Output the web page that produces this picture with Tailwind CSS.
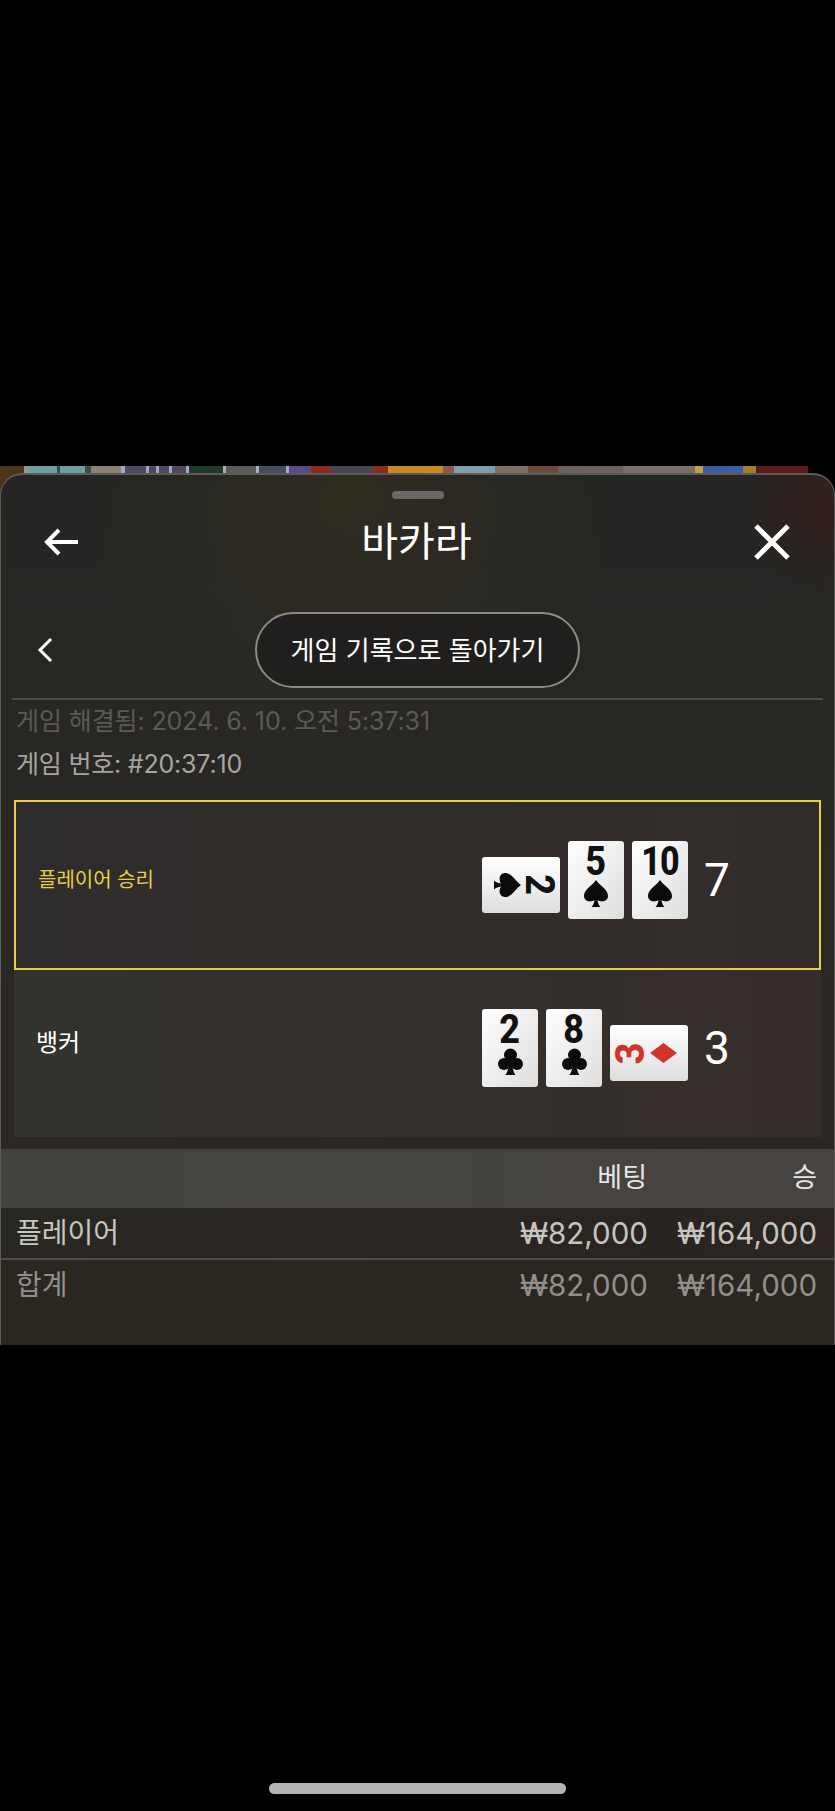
<!doctype html>
<html lang="ko">
<head>
<meta charset="utf-8">
<title>바카라</title>
<script src="https://cdn.jsdelivr.net/npm/@tailwindcss/browser@4"></script>
</head>
<body class="bg-black">
<div class="relative w-[835px] h-[1811px] overflow-hidden bg-black pt-[466px] font-['Inter','Noto_Sans_CJK_KR',sans-serif]">
  <!-- game scene peeking above the sheet -->
  <div class="flex h-[26px]">
    <div class="w-[24px] bg-[#4a3518]"></div><div class="w-[4px] bg-[#8f9a90]"></div><div class="w-[29px] bg-[#6d9ea0]"></div><div class="w-[3px] bg-[#3a4a50]"></div><div class="w-[25px] bg-[#6d9ea0]"></div><div class="w-[6px] bg-[#3a4a50]"></div><div class="w-[30px] bg-[#8c8172]"></div><div class="w-[4px] bg-[#a9a6c4]"></div><div class="w-[21px] bg-[#4c4860]"></div><div class="w-[3px] bg-[#a9a6c4]"></div><div class="w-[7px] bg-[#4c4860]"></div><div class="w-[3px] bg-[#a9a6c4]"></div><div class="w-[10px] bg-[#4c4860]"></div><div class="w-[3px] bg-[#a9a6c4]"></div><div class="w-[14px] bg-[#4c4860]"></div><div class="w-[3px] bg-[#a9a6c4]"></div><div class="w-[34px] bg-[#1f3a2c]"></div><div class="w-[3px] bg-[#a9b0b0]"></div><div class="w-[30px] bg-[#5a5a58]"></div><div class="w-[3px] bg-[#a9b0b0]"></div><div class="w-[27px] bg-[#454c60]"></div><div class="w-[3px] bg-[#a9a6c4]"></div><div class="w-[22px] bg-[#5b4a8a]"></div><div class="w-[20px] bg-[#8a2a20]"></div><div class="w-[42px] bg-[#474650]"></div><div class="w-[15px] bg-[#8a2a20]"></div><div class="w-[55px] bg-[#c88a20]"></div><div class="w-[11px] bg-[#8a5a50]"></div><div class="w-[41px] bg-[#7f9fb0]"></div><div class="w-[33px] bg-[#7b6f60]"></div><div class="w-[30px] bg-[#6a4a3a]"></div><div class="w-[65px] bg-[#6b5f5f]"></div><div class="w-[72px] bg-[#7a6e68]"></div><div class="w-[8px] bg-[#c0a040]"></div><div class="w-[40px] bg-[#3a5ea0]"></div><div class="w-[13px] bg-[#a08030]"></div><div class="w-[52px] bg-[#5a1a18]"></div>
  </div>

  <!-- sheet -->
  <div class="relative -mt-[19px] h-[872px] rounded-t-[22px] border-x border-t-2 border-[#5c5b58] bg-[radial-gradient(circle_at_100%_3%,#341f1c,transparent_90px),radial-gradient(circle_at_42%_3%,#2e2b20,transparent_260px),linear-gradient(180deg,#252523_0%,#2a2825_45%,#2b2620_100%)]">
    <div class="mx-auto mt-[16px] h-[8px] w-[52px] rounded-full bg-[#6a6967]"></div>

    <div class="flex h-[86px] items-center justify-between pl-[42px] pr-[44px]">
      <svg class="h-[28px] w-[36px]" viewBox="0 0 36 28" fill="none" stroke="#fff" stroke-width="4"><path d="M35 14H4M16 2 4 14l12 12"/></svg>
      <h1 class="text-[40px] leading-none font-normal text-white">바카라</h1>
      <svg class="h-[36px] w-[36px]" viewBox="0 0 36 36" fill="none" stroke="#fff" stroke-width="5"><path d="M2 2 34 34M34 2 2 34"/></svg>
    </div>

    <div class="relative mt-[27px] flex h-[76px] justify-center">
      <svg class="absolute left-[35px] top-[25px] h-[26px] w-[18px]" viewBox="0 0 18 26" fill="none" stroke="#fff" stroke-width="3"><path d="M15 2 4 13l11 11"/></svg>
      <button class="h-[76px] w-[325px] rounded-full border-2 border-[#8b8a85] bg-[#201f1d] text-[26px] text-white">게임 기록으로 돌아가기</button>
    </div>

    <div class="mx-[11px] mt-[10px] h-[2px] bg-[#4b4a44]"></div>

    <p class="mt-[2px] flex h-[40px] items-center px-[15px] text-[25px] tracking-[-0.1px] text-[#5b5a55]">게임 해결됨: 2024. 6. 10. 오전 5:37:31</p>
    <p class="mt-[3px] flex h-[40px] items-center px-[15px] text-[25px] tracking-[-0.2px] text-[#a6a5a0]">게임 번호: #20:37:10</p>

    <div class="mx-[13px] mt-[15px]">
      <div class="flex h-[170px] items-center justify-between border-2 border-[#e6cf45] bg-linear-to-r from-[#2f2d2c] to-[#332d2a] pl-[22px] pb-[10px]">
        <span class="text-[20px] text-[#e8cf45]">플레이어 승리</span>
        <div class="flex items-center gap-[8px] pr-[75px]">
          <div class="mt-[10px] flex h-[56px] w-[78px] items-center justify-center">
            <div class="flex h-[78px] w-[56px] shrink-0 rotate-90 flex-col items-center rounded-[3px] bg-linear-to-r from-white to-[#dedede] pt-[3px]">
              <span class="h-[36px] scale-x-[.9] font-['Roboto'] text-[40px] leading-[36px] font-extrabold text-[#111]">2</span>
              <svg class="h-[27px] w-[24px]" viewBox="0 0 24 27" fill="#0b0b0b"><path d="M12 0C9 5 0 9 0 16c0 5 6 7 10.500 4-.5 3-1 5-3 7h9c-2-2-2.500-4-3-7 4.500 3 10.500 1 10.500-4C24 9 15 5 12 0Z"/></svg>
            </div>
          </div>
          <div class="flex h-[78px] w-[56px] flex-col items-center rounded-[3px] bg-linear-to-br from-white to-[#dedede] pt-[3px]">
            <span class="h-[36px] scale-x-[.9] font-['Roboto'] text-[40px] leading-[36px] font-extrabold text-[#111]">5</span>
            <svg class="h-[27px] w-[24px]" viewBox="0 0 24 27" fill="#0b0b0b"><path d="M12 0C9 5 0 9 0 16c0 5 6 7 10.500 4-.5 3-1 5-3 7h9c-2-2-2.500-4-3-7 4.500 3 10.500 1 10.500-4C24 9 15 5 12 0Z"/></svg>
          </div>
          <div class="flex h-[78px] w-[56px] flex-col items-center rounded-[3px] bg-linear-to-br from-white to-[#dedede] pt-[3px]">
            <span class="h-[36px] scale-x-[.85] font-['Roboto'] text-[40px] leading-[36px] font-extrabold tracking-[-1px] text-[#111]">10</span>
            <svg class="h-[27px] w-[24px]" viewBox="0 0 24 27" fill="#0b0b0b"><path d="M12 0C9 5 0 9 0 16c0 5 6 7 10.500 4-.5 3-1 5-3 7h9c-2-2-2.500-4-3-7 4.500 3 10.500 1 10.500-4C24 9 15 5 12 0Z"/></svg>
          </div>
          <span class="ml-[8px] w-[40px] font-['Roboto'] text-[46px] leading-none font-normal text-white">7</span>
        </div>
      </div>

      <div class="flex h-[167px] items-center justify-between bg-linear-to-r from-[#33322d] to-[#362e2b] pl-[22px] pb-[12px]">
        <span class="mb-[9px] text-[24px] text-white">뱅커</span>
        <div class="flex items-center gap-[8px] pr-[79px]">
          <div class="flex h-[78px] w-[56px] flex-col items-center rounded-[3px] bg-linear-to-br from-white to-[#dedede] pt-[3px]">
            <span class="h-[36px] scale-x-[.9] font-['Roboto'] text-[40px] leading-[36px] font-extrabold text-[#111]">2</span>
            <svg class="h-[28px] w-[25px]" viewBox="0 0 25 28" fill="#0b0b0b"><circle cx="12.500" cy="7" r="6.500"/><circle cx="6" cy="16" r="6"/><circle cx="19" cy="16" r="6"/><path d="M11 12h3c0 7 1 11 3.500 15h-10C10 23 11 19 11 12Z"/></svg>
          </div>
          <div class="flex h-[78px] w-[56px] flex-col items-center rounded-[3px] bg-linear-to-br from-white to-[#dedede] pt-[3px]">
            <span class="h-[36px] scale-x-[.9] font-['Roboto'] text-[40px] leading-[36px] font-extrabold text-[#111]">8</span>
            <svg class="h-[28px] w-[25px]" viewBox="0 0 25 28" fill="#0b0b0b"><circle cx="12.500" cy="7" r="6.500"/><circle cx="6" cy="16" r="6"/><circle cx="19" cy="16" r="6"/><path d="M11 12h3c0 7 1 11 3.500 15h-10C10 23 11 19 11 12Z"/></svg>
          </div>
          <div class="mt-[10px] flex h-[56px] w-[78px] items-center justify-center">
            <div class="flex h-[78px] w-[56px] shrink-0 -rotate-90 flex-col items-center rounded-[3px] bg-linear-to-l from-white to-[#dedede] pt-[3px]">
              <span class="h-[36px] scale-x-[.95] font-['Roboto'] text-[40px] leading-[36px] font-extrabold text-[#d0352b]">3</span>
              <svg class="mt-[1px] h-[27px] w-[20px]" viewBox="0 0 20 27" fill="#d0352b"><path d="M10 0 20 13.500 10 27 0 13.500Z"/></svg>
            </div>
          </div>
          <span class="ml-[8px] w-[38px] font-['Roboto'] text-[46px] leading-none font-normal text-white">3</span>
        </div>
      </div>
    </div>

    <div class="mt-[12px] flex h-[59px] items-center bg-linear-to-r from-[#43443f] to-[#474341] pr-[17px] text-[27px] text-[#e6e6e4]">
      <span class="ml-auto w-[110px] text-right">베팅</span>
      <span class="w-[170px] text-right">승</span>
    </div>
    <div class="flex h-[50px] items-center bg-linear-to-r from-[#292722] to-[#2b2420] pr-[17px] pl-[15px] text-[#c6c5c1]">
      <span class="text-[28px]">플레이어</span>
      <span class="ml-auto text-[29.5px]">₩82,000</span>
      <span class="ml-[29px] text-[29.5px]">₩164,000</span>
    </div>
    <div class="h-[2px] bg-[#4e4c44]"></div>
    <div class="flex h-[50px] items-center pr-[17px] pl-[15px] text-[#918f8a]">
      <span class="text-[28px]">합계</span>
      <span class="ml-auto text-[29.5px]">₩82,000</span>
      <span class="ml-[29px] text-[29.5px]">₩164,000</span>
    </div>
  </div>

  <!-- home indicator -->
  <div class="absolute bottom-[17px] left-[269px] h-[11px] w-[297px] rounded-full bg-[#b4b4b4]"></div>
</div>
</body>
</html>
